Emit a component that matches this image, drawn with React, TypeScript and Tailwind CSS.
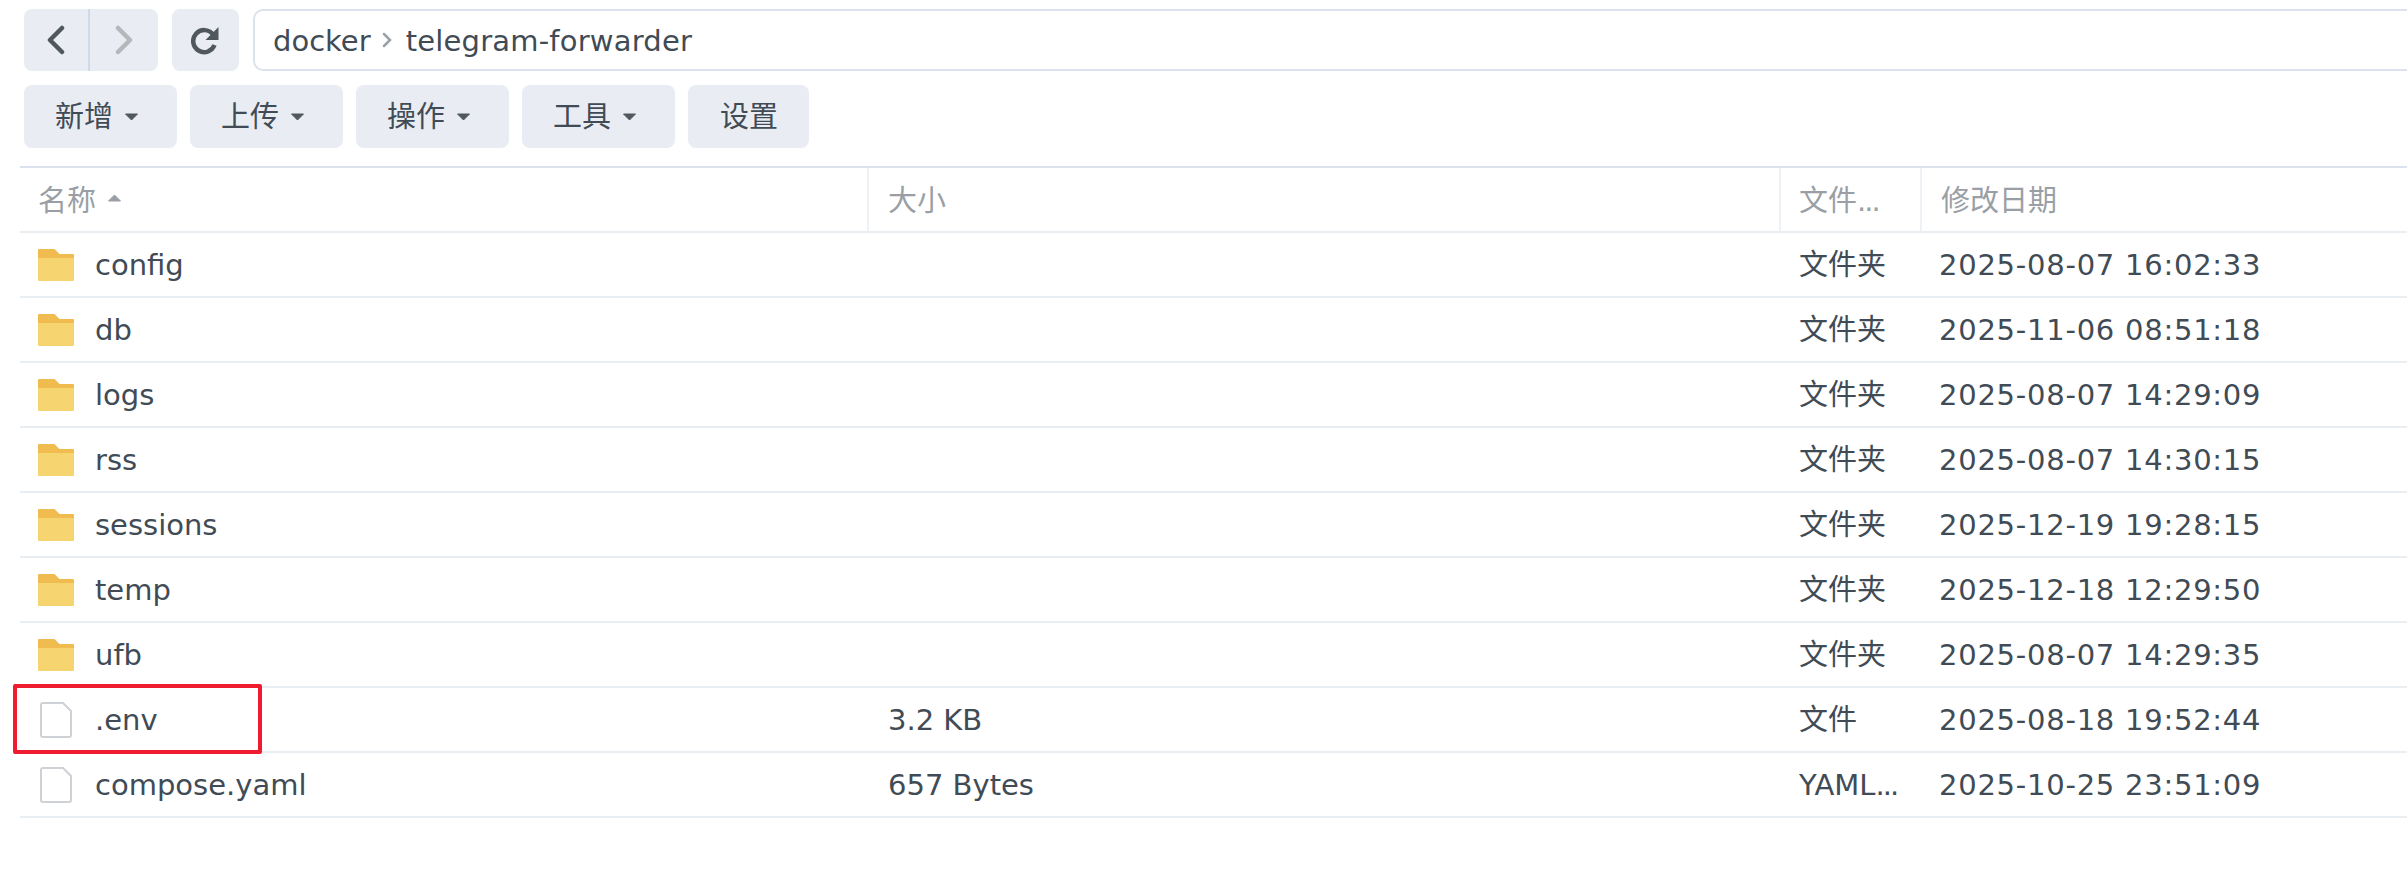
const font = "font-['DejaVu_Sans','Noto_Sans_CJK_SC',sans-serif]";

interface Row {
  name: string;
  size?: string;
  type: string;
  date: string;
  folder?: boolean;
  marked?: boolean;
  cut?: boolean;
}

const rows: Row[] = [
  { name: "config", type: "文件夹", date: "2025-08-07 16:02:33", folder: true },
  { name: "db", type: "文件夹", date: "2025-11-06 08:51:18", folder: true },
  { name: "logs", type: "文件夹", date: "2025-08-07 14:29:09", folder: true },
  { name: "rss", type: "文件夹", date: "2025-08-07 14:30:15", folder: true },
  { name: "sessions", type: "文件夹", date: "2025-12-19 19:28:15", folder: true },
  { name: "temp", type: "文件夹", date: "2025-12-18 12:29:50", folder: true },
  { name: "ufb", type: "文件夹", date: "2025-08-07 14:29:35", folder: true },
  { name: ".env", size: "3.2 KB", type: "文件", date: "2025-08-18 19:52:44", marked: true },
  { name: "compose.yaml", size: "657 Bytes", type: "YAML", date: "2025-10-25 23:51:09", cut: true },
];

const menus = [
  { label: "新增", caret: true },
  { label: "上传", caret: true },
  { label: "操作", caret: true },
  { label: "工具", caret: true },
  { label: "设置", caret: false },
];

function Caret({ className }: { className: string }) {
  return (
    <svg width="15" height="8" viewBox="0 0 15 8" className={className}>
      <path d="M1.5 1h12L7.5 7z" fill="currentColor" stroke="currentColor" strokeLinejoin="round" />
    </svg>
  );
}

function FolderIcon() {
  return (
    <svg width="36" height="32" viewBox="0 0 36 32" className="shrink-0">
      <path d="M0 1a1 1 0 0 1 1-1h15.5l5 5H35a1 1 0 0 1 1 1v6H0z" fill="#f0bc50" />
      <path d="M0 9h36v22a1 1 0 0 1-1 1H1a1 1 0 0 1-1-1z" fill="#f6d46f" />
    </svg>
  );
}

function FileIcon() {
  return (
    <svg width="32" height="36" viewBox="0 0 32 36" className="ml-[2px] mr-[2px] shrink-0">
      <path
        d="M3 1h20l8 8v24a2 2 0 0 1-2 2H3a2 2 0 0 1-2-2V3a2 2 0 0 1 2-2z"
        fill="#fff"
        stroke="#ced2d6"
        strokeWidth="2"
      />
    </svg>
  );
}

export default function App() {
  return (
    <div className={`${font} h-screen w-full overflow-hidden bg-white text-[#414b55]`}>
      <div className="flex h-[85px] items-start gap-[14px] pl-6 pt-[9px]">
        <div className="flex h-[62px] w-[134px] rounded-lg bg-[#e9edf3]">
          <div className="flex w-[66px] items-center justify-center border-r-2 border-[#d0d9e6]">
            <svg width="20" height="30" viewBox="0 0 20 30">
              <path d="M16 3 4 15l12 12" fill="none" stroke="#50575f" strokeWidth="4.5" strokeLinecap="round" strokeLinejoin="round" />
            </svg>
          </div>
          <div className="flex flex-1 items-center justify-center">
            <svg width="20" height="30" viewBox="0 0 20 30">
              <path d="M4 3l12 12L4 27" fill="none" stroke="#b5b7ba" strokeWidth="4.5" strokeLinecap="round" strokeLinejoin="round" />
            </svg>
          </div>
        </div>
        <div className="flex h-[62px] w-[67px] items-center justify-center rounded-lg bg-[#e9edf3]">
          <svg width="30" height="30" viewBox="0 0 30 30">
            <path d="M22 9.5A11 11 0 1 0 23.5 20" fill="none" stroke="#50575f" strokeWidth="4.5" />
            <path d="M27.5 2v13h-13z" fill="#50575f" />
          </svg>
        </div>
        <div className="flex h-[62px] flex-1 items-center rounded-l-[10px] border-2 border-r-0 border-[#dbe2ee] pl-[18px] text-[29px]">
          <span className="pt-[3px]">docker</span>
          <svg width="10" height="18" viewBox="0 0 10 18" className="ml-[11px] mr-[14px]">
            <path d="M2 3l6 6-6 6" fill="none" stroke="#9aa0a6" strokeWidth="2.5" strokeLinecap="round" />
          </svg>
          <span className="pt-[3px] tracking-[0.2px]">telegram-forwarder</span>
        </div>
      </div>

      <div className="flex h-[63px] gap-[13px] pl-6">
        {menus.map((m) => (
          <div
            key={m.label}
            className={`flex items-center rounded-lg bg-[#e9edf3] text-[29px] ${m.caret ? "w-[153px] pl-[31px]" : "w-[121px] pl-[32px]"}`}
          >
            <span className="pt-[2px]">{m.label}</span>
            {m.caret && <Caret className="ml-[11px] text-[#50575f]" />}
          </div>
        ))}
      </div>

      <div className="ml-5 mt-[18px]">
        <div className="grid h-[67px] grid-cols-[849px_912px_141px_1fr] border-y-2 border-t-[#dbe2ee] border-b-[#e9eef3] text-[29px] text-[#9a9fa5]">
          <div className="flex items-center border-r-2 border-[#eef1f5] pl-[18px]">
            <span className="pt-1">名称</span>
            <Caret className="ml-[11px] mb-1 rotate-180" />
          </div>
          <div className="flex items-center border-r-2 border-[#eef1f5] pl-[19px] pt-1">大小</div>
          <div className="flex items-center border-r-2 border-[#eef1f5] pl-[18px] pt-1">
            文件<span className="tracking-[-2px]">...</span>
          </div>
          <div className="flex items-center pl-[19px] pt-1">修改日期</div>
        </div>
        {rows.map((r) => (
          <div
            key={r.name}
            className="relative grid h-[65px] grid-cols-[849px_912px_141px_1fr] items-center border-b-2 border-[#e9eef3] text-[29px]"
          >
            <div className="flex items-center gap-[21px] pl-[18px]">
              {r.folder ? <FolderIcon /> : <FileIcon />}
              <span className="pt-[3px]">{r.name}</span>
            </div>
            <div className="pl-[19px] pt-[3px]">{r.size}</div>
            <div className="pl-[18px] pt-[3px]">
              {r.type}
              {r.cut && <span className="tracking-[-2px]">...</span>}
            </div>
            <div className="pl-[17px] pt-[3px] tracking-[0.75px]">{r.date}</div>
            {r.marked && (
              <div className="absolute -left-[7px] -top-[4px] h-[70px] w-[249px] rounded-[2px] border-4 border-[#ee1c2e]" />
            )}
          </div>
        ))}
      </div>
    </div>
  );
}
